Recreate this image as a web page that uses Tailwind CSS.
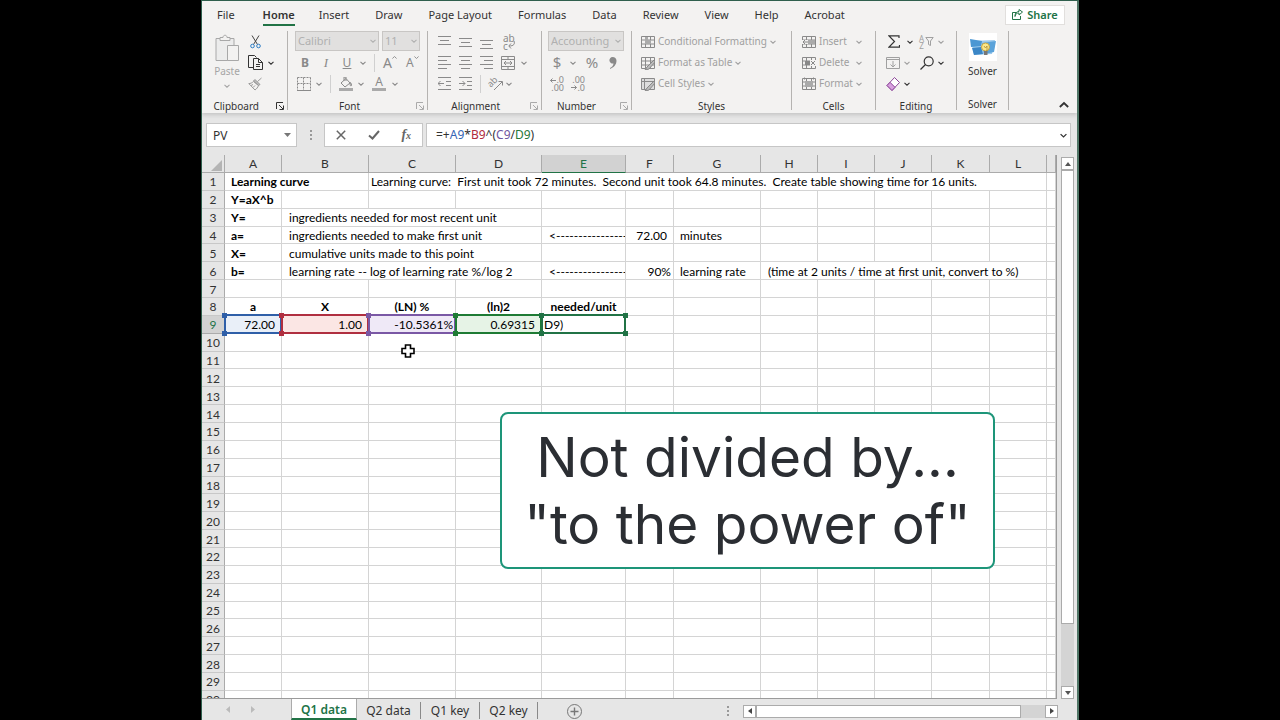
<!DOCTYPE html>
<html lang="en">
<head>
  <meta charset="UTF-8">
  <meta name="viewport" content="width=device-width, initial-scale=1.0" />
  <title>Learning curve - Excel</title>
  <script src="https://cdn.jsdelivr.net/npm/@tailwindcss/browser@4"></script>
</head>
<body class="bg-black px-[201px] font-['Noto_Sans',sans-serif] text-[10px] text-[#333]">

  <!-- shared icons -->
  <svg class="hidden">
    <symbol id="chev" viewBox="0 0 6 6"><path d="M.5 1.8 3 4.2 5.500 1.800" fill="none" stroke="currentColor" stroke-width="1.1"/></symbol>
    <symbol id="launch" viewBox="0 0 8 8"><path d="M.5 7V.5H7M3 3l4 4M7.500 3.500v4h-4" fill="none" stroke="currentColor"/></symbol>
    <symbol id="grid" viewBox="0 0 14 14"><path d="M.5 1.500h13v11H.5zM.5 5h13M.5 9h13M4.500 1.500v11M9.500 1.500v11" fill="none" stroke="currentColor"/></symbol>
  </svg>

  <main class="relative flex h-screen flex-col overflow-hidden border-t border-r-2 border-t-[#2f5f4d] border-r-[#4f7566] border-l border-l-[#2f5f4d] bg-[#e6e6e6]">

    <header class="bg-[#f3f2f1] shadow-[0_2px_4px_#c4c4c4]">
      <nav class="flex h-[29px] items-center gap-[28px] pr-[12px] pb-[2px] pl-[15px] text-[11px] leading-4">
        <a href="#">File</a>
        <a href="#" class="relative font-semibold after:absolute after:inset-x-0 after:-bottom-[3px] after:h-[2px] after:bg-[#217346]">Home</a>
        <a href="#" class="-ml-[4px]">Insert</a>
        <a href="#" class="-ml-[2px]">Draw</a>
        <a href="#" class="-ml-[2px]">Page Layout</a>
        <a href="#" class="-ml-[2px]">Formulas</a>
        <a href="#" class="-ml-[2px]">Data</a>
        <a href="#" class="-ml-[2px]">Review</a>
        <a href="#" class="-ml-[2px]">View</a>
        <a href="#" class="-ml-[2px]">Help</a>
        <a href="#" class="-ml-[2px]">Acrobat</a>
        <button class="ml-auto flex h-5 w-[60px] items-center justify-center gap-1 border border-[#e1dfdd] bg-white font-semibold text-[#217346]">
          <svg class="size-[11px]" viewBox="0 0 11 11" fill="none" stroke="currentColor"><path d="M4 3.500H.5v7h8V7M3 7.500c.3-2.500 1.800-3.500 4-3.500V6l3.500-3L7 .5v2C4.500 2.600 3 4 3 7.500z"/></svg>
          Share
        </button>
      </nav>

      <div class="flex h-[83px] pt-px pb-[3px]">
        <!-- Clipboard -->
        <section class="flex w-[85px] flex-col">
          <div class="flex h-[63px] pl-[10px] text-[#a5a5a5]">
            <button class="flex w-[30px] flex-col items-center">
              <svg class="mt-[3px] h-7 w-6 shrink-0" viewBox="0 0 24 28" fill="none" stroke="#a8a8a8"><path d="M1 4.500h18v22H1z" fill="#ececec"/><path d="M5 6.500V3.500h3c0-3 4-3 4 0h3v3z" fill="#f3f2f1"/><path d="M12.500 11.500h11v15h-11z" fill="#f3f2f1"/></svg>
              <span class="leading-[18px]">Paste</span>
              <svg class="mt-[3px] size-[6px]"><use href="#chev"/></svg>
            </button>
            <div class="ml-[5px] flex flex-col">
              <button aria-label="Cut" class="flex h-[21px] items-center pl-[3px]">
                <svg class="h-[14px] w-[11px]" viewBox="0 0 11 14" fill="none"><path d="M2 .5 7.500 9.500M9 .5 3.500 9.500" stroke="#444"/><circle cx="2.500" cy="11" r="1.800" stroke="#2b7cc4"/><circle cx="8.500" cy="11" r="1.800" stroke="#2b7cc4"/></svg>
              </button>
              <button aria-label="Copy" class="flex h-[21px] items-center gap-[5px] pl-[1px] text-[#333]">
                <svg class="h-[15px] w-[15px]" viewBox="0 0 15 15" fill="none" stroke="currentColor"><path d="M5 12.500H.5V.5h6l2 2"/><path d="M5.500 3.500h5l4 4v7h-9zM10.500 3.500v4h4M8 9.500h4M8 11.500h4"/></svg>
                <svg class="size-[6px]"><use href="#chev"/></svg>
              </button>
              <button aria-label="Format Painter" class="flex h-[21px] items-center pl-[1px]">
                <svg class="h-[14px] w-[15px]" viewBox="0 0 15 14" fill="none" stroke="#9a9a9a"><path d="m13.500 1-4 3.500M7 2.500l5 5-1.500 1-5-4.500z" fill="#bbb"/><path d="M5.500 4.500C4 6 2.500 6.500.8 6.600L7 13c1.500-1 2.800-2.600 3.500-4.500zM3 8.500l2-1M5 10.500l2-2"/></svg>
              </button>
            </div>
          </div>
          <div class="flex items-center justify-center pt-[6px] leading-3"><span class="ml-auto">Clipboard</span><button aria-label="Clipboard settings" class="mr-[3px] ml-[17px]"><svg class="size-2"><use href="#launch"/></svg></button></div>
        </section>

        <!-- Font -->
        <section class="flex w-[140px] flex-col border-l border-[#b5b3b1]">
          <div class="h-[63px] pl-[7px] text-[#8a8a8a]">
            <div class="flex h-[21px] gap-[3px] text-[11px] text-[#b0b0b0]">
              <div class="relative h-5 w-[84px]">
                <select aria-label="Font" class="h-5 w-full appearance-none border border-[#c8c6c4] bg-[#e1e0df] pl-[2px] leading-4"><option>Calibri</option></select>
                <svg class="pointer-events-none absolute top-[7px] right-[3px] size-[6px]"><use href="#chev"/></svg>
              </div>
              <div class="relative h-5 w-[38px]">
                <select aria-label="Font size" class="h-5 w-full appearance-none border border-[#c8c6c4] bg-[#e1e0df] pl-[2px] leading-4"><option>11</option></select>
                <svg class="pointer-events-none absolute top-[7px] right-[3px] size-[6px]"><use href="#chev"/></svg>
              </div>
            </div>
            <div class="flex h-[21px] items-center text-xs">
              <button class="w-[20px] font-bold">B</button>
              <button class="w-[22px] font-['Liberation_Serif',serif] text-[13px] italic">I</button>
              <button class="w-[20px] underline">U</button>
              <svg class="ml-[3px] size-[6px]"><use href="#chev"/></svg>
              <i class="mx-[8px] h-[18px] w-px bg-[#d0d0d0]"></i>
              <button class="flex w-[20px] items-start text-sm leading-4">A<svg class="size-[5px] rotate-180"><use href="#chev"/></svg></button>
              <button class="ml-[3px] flex items-start text-xs leading-4">A<svg class="size-[5px]"><use href="#chev"/></svg></button>
            </div>
            <div class="flex h-[21px] items-center">
              <button aria-label="Borders" class="ml-[2px]"><svg class="size-[14px]" viewBox="0 0 14 14" fill="none" stroke="currentColor"><path d="M.5.5h13M.5 6.500h13M.5.5v13M6.500.5v13M13.500.5v13" stroke-dasharray="2 1"/><path d="M0 13.500h14"/></svg></button>
              <svg class="ml-[5px] size-[6px]"><use href="#chev"/></svg>
              <i class="mx-[8px] h-[18px] w-px bg-[#d0d0d0]"></i>
              <button aria-label="Fill color"><svg class="h-[14px] w-[14px]" viewBox="0 0 14 14" fill="none" stroke="currentColor"><path d="m2 6 5-4.500L11 6 6 10zM5 4V0h2v4M11.500 5.500c1.500 2 1 3.500.5 3.500s-1.500-1-.5-3.500"/><path d="M0 12.500h14" stroke="#aaa" stroke-width="3"/></svg></button>
              <svg class="ml-[5px] size-[6px]"><use href="#chev"/></svg>
              <button class="ml-[8px] h-[15px] w-[14px] border-b-3 border-[#aaa] text-xs leading-[12px]">A</button>
              <svg class="ml-[6px] size-[6px]"><use href="#chev"/></svg>
            </div>
          </div>
          <div class="flex items-center pt-[6px] leading-3"><span class="ml-auto">Font</span><button aria-label="Font settings" class="mr-[3px] ml-[56px] text-[#aaa]"><svg class="size-2"><use href="#launch"/></svg></button></div>
        </section>

        <!-- Alignment -->
        <section class="flex w-[114px] flex-col border-l border-[#b5b3b1]">
          <div class="h-[63px] pl-[10px] text-[#8a8a8a]">
            <div class="flex h-[21px] items-center gap-[8px]">
              <button aria-label="Top Align"><svg class="size-[13px]" viewBox="0 0 13 13" stroke="currentColor"><path d="M0 1.500h13M2 5.500h9M0 9.500h13"/></svg></button>
              <button aria-label="Middle Align"><svg class="size-[13px]" viewBox="0 0 13 13" stroke="currentColor"><path d="M0 3.500h13M2 7.500h9M0 11.500h13"/></svg></button>
              <button aria-label="Bottom Align"><svg class="h-[15px] w-[13px]" viewBox="0 0 13 15" stroke="currentColor"><path d="M0 6.500h13M2 10.500h9M0 14.500h13"/></svg></button>
              <button aria-label="Wrap Text" class="relative h-[17px] w-[16px] pl-[2px] text-left text-[10px] leading-[8px]">ab<br>c<svg class="absolute right-[2px] bottom-px h-[8px] w-[7px]" viewBox="0 0 7 8" fill="none" stroke="currentColor"><path d="M6 0c1 3 0 5-5 5M3 2.500.8 5 3 7.500"/></svg></button>
            </div>
            <div class="flex h-[21px] items-center gap-[8px]">
              <button aria-label="Align Left"><svg class="size-[13px]" viewBox="0 0 13 13" stroke="currentColor"><path d="M0 .5h13M0 4.500h9M0 8.500h13M0 12.500h9"/></svg></button>
              <button aria-label="Center"><svg class="size-[13px]" viewBox="0 0 13 13" stroke="currentColor"><path d="M0 .5h13M2 4.500h9M0 8.500h13M2 12.500h9"/></svg></button>
              <button aria-label="Align Right"><svg class="size-[13px]" viewBox="0 0 13 13" stroke="currentColor"><path d="M0 .5h13M4 4.500h9M0 8.500h13M4 12.500h9"/></svg></button>
              <button aria-label="Merge" class="flex items-center gap-[6px]"><svg class="size-[14px]" viewBox="0 0 14 14" fill="none" stroke="currentColor"><path d="M.5.5h13v13H.5zM.5 3.500h13M.5 10.500h13M7 .5v3M7 10.500v3M3 7h8M5 5 3 7l2 2M9 5l2 2-2 2"/></svg><svg class="size-[6px]"><use href="#chev"/></svg></button>
            </div>
            <div class="flex h-[21px] items-center gap-[8px]">
              <button aria-label="Decrease Indent"><svg class="size-[13px]" viewBox="0 0 13 13" fill="none" stroke="currentColor"><path d="M0 .5h13M8 4.500h5M8 8.500h5M0 12.500h13M0 6.500h6M2.500 4 0 6.500 2.500 9"/></svg></button>
              <button aria-label="Increase Indent"><svg class="size-[13px]" viewBox="0 0 13 13" fill="none" stroke="currentColor"><path d="M0 .5h13M8 4.500h5M8 8.500h5M0 12.500h13M0 6.500h6M3.500 4 6 6.500 3.500 9"/></svg></button>
              <i class="h-[18px] w-px bg-[#d0d0d0]"></i>
              <button aria-label="Orientation" class="-ml-[2px] flex items-center gap-[3px]"><span class="relative h-[14px] w-[16px]"><span class="absolute top-0 left-0 -rotate-45 text-[9px] leading-[10px]">ab</span><svg class="absolute right-0 bottom-0 h-[12px] w-[12px]" viewBox="0 0 12 12" fill="none" stroke="currentColor"><path d="M3 11 11 3M7.500 2.500H11.500V6.500"/></svg></span><svg class="size-[6px]"><use href="#chev"/></svg></button>
            </div>
          </div>
          <div class="flex items-center pt-[6px] leading-3"><span class="ml-auto">Alignment</span><button aria-label="Alignment settings" class="mr-[3px] ml-[30px] text-[#aaa]"><svg class="size-2"><use href="#launch"/></svg></button></div>
        </section>

        <!-- Number -->
        <section class="flex w-[90px] flex-col border-l border-[#b5b3b1]">
          <div class="h-[63px] pl-[6px] text-[#8a8a8a]">
            <div class="relative h-[21px] w-[76px] text-[11px] text-[#b0b0b0]">
              <select aria-label="Number format" class="h-5 w-full appearance-none border border-[#c8c6c4] bg-[#e1e0df] pl-[2px] leading-4"><option>Accounting</option></select>
              <svg class="pointer-events-none absolute top-[7px] right-[3px] size-[6px]"><use href="#chev"/></svg>
            </div>
            <div class="flex h-[21px] items-center text-[15px]">
              <button class="w-[18px]">$</button>
              <svg class="ml-[4px] size-[6px]"><use href="#chev"/></svg>
              <button class="ml-[8px] w-[16px]">%</button>
              <button aria-label="Comma Style" class="ml-[9px]"><svg class="h-[12px] w-[8px]" viewBox="0 0 8 12" fill="currentColor"><path d="M3.500 0a3.300 3.300 0 1 0 1 6.500C4.300 8.500 3 10 1 11v1c4-1.500 6.500-4.500 6.500-8.200C7.500 1.500 5.800 0 3.500 0z"/></svg></button>
            </div>
            <div class="flex h-[21px] items-center gap-[7px] pl-[2px] text-[9px] leading-[8px]">
              <button class="relative w-[14px] pt-px text-right"><svg class="absolute top-[3px] left-0 h-[5px] w-[6px]" viewBox="0 0 6 5" fill="none" stroke="currentColor"><path d="M.5 2.500H6M2.500.5l-2 2 2 2"/></svg>.0<br>.00</button>
              <button class="relative w-[14px] pt-px text-right">.00<br>.0<svg class="absolute bottom-[2px] left-0 h-[5px] w-[6px]" viewBox="0 0 6 5" fill="none" stroke="currentColor"><path d="M0 2.500H5.500M3.500.5l2 2-2 2"/></svg></button>
            </div>
          </div>
          <div class="flex items-center pt-[6px] leading-3"><span class="ml-auto">Number</span><button aria-label="Number settings" class="mr-[3px] ml-6 text-[#aaa]"><svg class="size-2"><use href="#launch"/></svg></button></div>
        </section>

        <!-- Styles -->
        <section class="flex w-[160px] flex-col border-l border-[#b5b3b1]">
          <div class="h-[63px] pl-[9px] text-[#a0a0a0]">
            <button class="flex h-[21px] items-center gap-[3px]"><svg class="size-[14px] text-[#8a8a8a]" viewBox="0 0 14 14"><use href="#grid"/><path d="M4 2h3v3h3v4H4z" fill="#aaa"/></svg>Conditional Formatting<svg class="size-[6px]"><use href="#chev"/></svg></button>
            <button class="flex h-[21px] items-center gap-[3px]"><svg class="size-[14px] text-[#8a8a8a]" viewBox="0 0 14 14"><use href="#grid"/><path d="m13 4-7 7-2 3 4-1 6-7z" fill="#bbb" stroke="#888"/></svg>Format as Table<svg class="size-[6px]"><use href="#chev"/></svg></button>
            <button class="flex h-[21px] items-center gap-[3px]"><svg class="size-[14px] text-[#8a8a8a]" viewBox="0 0 14 14"><path d="M.5 1.500h13v11H.5zM.5 4.500h13M3.500 1.500v11" fill="#ddd" stroke="#8a8a8a"/><path d="m13 4-7 7-2 3 4-1 6-7z" fill="#bbb" stroke="#888"/></svg>Cell Styles<svg class="size-[6px]"><use href="#chev"/></svg></button>
          </div>
          <div class="pt-[6px] text-center leading-3">Styles</div>
        </section>

        <!-- Cells -->
        <section class="flex w-[84px] flex-col border-l border-[#b5b3b1]">
          <div class="h-[63px] pr-[13px] pl-[10px] text-[#a0a0a0]">
            <button class="flex h-[21px] w-full items-center gap-[3px]"><svg class="size-[14px] text-[#8a8a8a]" viewBox="0 0 14 14"><use href="#grid"/><path d="M0 5h6v4H0z" fill="#f3f2f1"/><path d="M6.500 7H1M3 5 1 7l2 2" fill="none" stroke="#888"/><path d="M6 5h7v4H6z" fill="#aaa"/></svg>Insert<svg class="ml-auto size-[6px]"><use href="#chev"/></svg></button>
            <button class="flex h-[21px] w-full items-center gap-[3px]"><svg class="size-[14px] text-[#8a8a8a]" viewBox="0 0 14 14"><use href="#grid"/><path d="M8 4h6v6H8z" fill="#f3f2f1"/><path d="m9 5 4 4M13 5 9 9" stroke="#888"/><path d="M3 5h5v4H3z" fill="#888"/></svg>Delete<svg class="ml-auto size-[6px]"><use href="#chev"/></svg></button>
            <button class="flex h-[21px] w-full items-center gap-[3px]"><svg class="size-[14px] text-[#8a8a8a]" viewBox="0 0 14 14"><use href="#grid"/><path d="M3 4h8v6H3z" fill="#aaa"/><path d="M2.500.5v2M11.500.5v2M2.500 1.500h9" stroke="#888"/></svg>Format<svg class="ml-auto size-[6px]"><use href="#chev"/></svg></button>
          </div>
          <div class="pt-[6px] text-center leading-3">Cells</div>
        </section>

        <!-- Editing -->
        <section class="flex w-[81px] flex-col border-l border-[#b5b3b1]">
          <div class="h-[63px] pl-[10px] text-[#333]">
            <div class="flex h-[21px] items-center">
              <button aria-label="AutoSum" class="flex w-[25px] items-center gap-[7px] pl-[2px]"><svg class="h-[13px] w-[12px] shrink-0" viewBox="0 0 12 13" fill="none" stroke="currentColor" stroke-width="1.200"><path d="M11 3V.8H1l5.500 5.700L1 12.200h10.500V10"/></svg><svg class="size-[6px] shrink-0"><use href="#chev"/></svg></button>
              <button aria-label="Sort and Filter" class="ml-[8px] flex items-center gap-[4px] text-[#a0a0a0]"><span class="text-[8px] leading-[7px]">A<br>Z</span><svg class="-ml-[3px] h-[9px] w-[9px]" viewBox="0 0 9 9" fill="none" stroke="currentColor"><path d="M.8.5h7.400L5.500 4v4.500L3.500 7.500V4z"/></svg><svg class="size-[6px]"><use href="#chev"/></svg></button>
            </div>
            <div class="flex h-[21px] items-center">
              <button aria-label="Fill" class="flex w-[25px] items-center gap-[4px] text-[#a0a0a0]"><svg class="h-[12px] w-[14px] shrink-0" viewBox="0 0 14 12" fill="none" stroke="currentColor"><path d="M.5.5h13v11H.5zM.5 2.500h13M7 4v6M4.500 7.500 7 10l2.500-2.500"/></svg><svg class="size-[6px] shrink-0"><use href="#chev"/></svg></button>
              <button aria-label="Find and Select" class="ml-[9px] flex items-center gap-[4px]"><svg class="size-[14px]" viewBox="0 0 14 14" fill="none" stroke="currentColor" stroke-width="1.200"><circle cx="8.700" cy="5.300" r="4.500"/><path d="M5.500 8.500.5 13.500"/></svg><svg class="size-[6px]"><use href="#chev"/></svg></button>
            </div>
            <button aria-label="Clear" class="flex h-[21px] items-center gap-[4px]"><svg class="size-[14px]" viewBox="0 0 14 14" fill="#fff" stroke="#8c4799"><path d="m1 8.500 7.500-8 5 5-7.500 8z"/><path d="m1 8.500 3-3.200 5 5L6 13.500z" fill="#d8a0df"/></svg><svg class="size-[6px]"><use href="#chev"/></svg></button>
          </div>
          <div class="pt-[6px] text-center leading-3">Editing</div>
        </section>

        <!-- Solver -->
        <section class="flex w-[53px] flex-col border-x border-[#b5b3b1]">
          <button class="flex h-[63px] flex-col items-center pt-[2px]">
            <svg class="size-7 shrink-0" viewBox="0 0 28 28"><path d="M0 0h28v28H0z" fill="#fff"/><path d="m2 8 24-1-3 14-18 1z" fill="#9cc9ec"/><path d="m1 6 12 2-1 5-10 1z" fill="#4b97d3"/><path d="m13 10 14-2-2 11-10 2z" fill="#5ba3da"/><path d="m3 15 9-1 2 7-9 1z" fill="#3b86c6"/><circle cx="16.500" cy="14" r="4" fill="#fbe88a" stroke="#c9a640"/><path d="M15 18h3.500v4H15z" fill="#777"/><path d="m15 13 1.500 2 1.500-2v5" fill="none" stroke="#a5812c" stroke-width=".7"/></svg>
            <span class="leading-[20px]">Solver</span>
          </button>
          <div class="pt-[6px] text-center leading-3">Solver</div>
        </section>
        <button aria-label="Collapse the Ribbon" class="mr-2 ml-auto self-end"><svg class="size-[10px] rotate-180"><use href="#chev"/></svg></button>
      </div>
    </header>

    <!-- formula bar -->
    <div class="mt-[10px] flex h-6 shrink-0 pr-[6px] pl-[4px] text-xs leading-4">
      <div class="relative w-[91px] border border-[#c6c6c6] bg-white">
        <input aria-label="Name Box" value="PV" class="h-full w-full pl-[6px] outline-none">
        <svg class="absolute top-[9px] right-[5px] h-1 w-[7px]" viewBox="0 0 7 4"><path d="M0 0h7L3.500 4z" fill="#777"/></svg>
      </div>
      <div class="flex w-[27px] items-center justify-center"><svg class="h-[11px] w-[2px]" viewBox="0 0 2 11" fill="#999"><path d="M0 0h2v2H0zM0 4h2v2H0zM0 8h2v2H0z"/></svg></div>
      <div class="flex w-[99px] items-center justify-around border border-[#c6c6c6] bg-white text-[#666]">
        <button aria-label="Cancel"><svg class="size-[10px]" viewBox="0 0 10 10" fill="none" stroke="currentColor" stroke-width="1.500"><path d="m.8.8 8.400 8.400M9.200.8.8 9.200"/></svg></button>
        <button aria-label="Enter"><svg class="h-[10px] w-[12px]" viewBox="0 0 12 10" fill="none" stroke="currentColor" stroke-width="2"><path d="m1 5.500 3.500 3L11 1"/></svg></button>
        <button aria-label="Insert Function" class="font-['Liberation_Serif',serif] text-sm font-bold italic">f<span class="text-[10px]">x</span></button>
      </div>
      <div class="ml-[3px] flex flex-1 items-center border border-[#c6c6c6] bg-white pr-[3px] pl-[9px]">
        <div role="textbox" aria-label="Formula Bar" contenteditable="true" class="flex-1 outline-none">=+<span class="text-[#3565b5]">A9</span>*<span class="text-[#b02a3c]">B9</span>^(<span class="text-[#6f559f]">C9</span>/<span class="text-[#27793a]">D9</span>)</div>
        <svg class="size-[7px]"><use href="#chev"/></svg>
      </div>
    </div>

    <!-- worksheet -->
    <div class="mt-2 flex min-h-0 flex-1">
      <div class="flex-1 overflow-hidden border-r border-b border-[#9b9b9b]">
        <table class="h-[554px] w-full table-fixed border-separate border-spacing-0 font-['Lato',sans-serif] text-xs leading-[14px] text-black">
          <colgroup>
            <col class="w-[23px]"><col class="w-[57px]"><col class="w-[87px]"><col class="w-[87px]"><col class="w-[86px]"><col class="w-[84px]"><col class="w-[48px]"><col class="w-[87px]"><col class="w-[57px]"><col class="w-[57px]"><col class="w-[57px]"><col class="w-[58px]"><col class="w-[57px]"><col>
          </colgroup>
          <thead><tr id="letters" class="h-[18px]"></tr></thead>
          <tbody id="rows"></tbody>
        </table>
      </div>
      <div class="flex w-[20px] flex-col pt-[2px] pr-[3px] pl-[4px]">
        <button aria-label="Scroll up" class="flex h-[13px] items-center justify-center border border-[#ababab] bg-white"><svg class="h-[4px] w-[6px]" viewBox="0 0 6 4"><path d="M0 4h6L3 0z" fill="#555"/></svg></button>
        <div class="flex-1 bg-[#d4d4d4]"><div class="h-[88%] border border-[#ababab] bg-white"></div></div>
        <button aria-label="Scroll down" class="flex h-[13px] items-center justify-center border border-[#ababab] bg-white"><svg class="h-[4px] w-[6px]" viewBox="0 0 6 4"><path d="M0 0h6L3 4z" fill="#555"/></svg></button>
      </div>
    </div>

    <!-- sheet tabs -->
    <footer class="flex h-[21px] shrink-0 text-xs leading-4">
      <div class="flex w-[89px] items-center gap-[21px] pl-[24px]">
        <svg class="h-[7px] w-[4px]" viewBox="0 0 4 7"><path d="M4 0v7L0 3.500z" fill="#bbb"/></svg>
        <svg class="h-[7px] w-[4px]" viewBox="0 0 4 7"><path d="M0 0v7l4-3.500z" fill="#bbb"/></svg>
      </div>
      <button class="w-[66px] border-x border-b-2 border-x-[#ababab] border-b-[#217346] bg-white pt-[2px] font-semibold text-[#217346]">Q1 data</button>
      <button class="mt-[3px] mb-px w-[64px] border-r border-[#8a8a8a]">Q2 data</button>
      <button class="mt-[3px] mb-px w-[59px] border-r border-[#8a8a8a]">Q1 key</button>
      <button class="mt-[3px] mb-px w-[58px] border-r border-[#8a8a8a]">Q2 key</button>
      <button aria-label="New sheet" class="ml-[29px] pt-[3px]"><svg class="size-[15px]" viewBox="0 0 15 15" fill="none" stroke="#777"><circle cx="7.500" cy="7.500" r="7"/><path d="M7.500 3.500v8M3.500 7.500h8" stroke-width="1.400"/></svg></button>
      <div class="ml-auto flex items-center pt-[3px] pr-[19px]">
        <svg class="mr-[14px] h-[10px] w-[2px]" viewBox="0 0 2 10" fill="#999"><path d="M0 0h2v2H0zM0 4h2v2H0zM0 8h2v2H0z"/></svg>
        <button aria-label="Scroll left" class="flex h-[13px] w-[13px] items-center justify-center border border-[#ababab] bg-white"><svg class="h-[6px] w-[4px]" viewBox="0 0 4 6"><path d="M4 0v6L0 3z" fill="#444"/></svg></button>
        <div class="h-[13px] w-[289px] bg-[#d4d4d4]"><div class="h-full w-[265px] border border-[#ababab] bg-white"></div></div>
        <button aria-label="Scroll right" class="flex h-[13px] w-[13px] items-center justify-center border border-[#ababab] bg-white"><svg class="h-[6px] w-[4px]" viewBox="0 0 4 6"><path d="M0 0v6l4-3z" fill="#444"/></svg></button>
      </div>
    </footer>

    <!-- mouse pointer -->
    <svg class="absolute top-[343px] left-[199px] size-[14px]" viewBox="0 0 14 14"><path d="M4.500 1h5v3.500H13v5H9.500V13h-5V9.500H1v-5h3.500z" fill="#fff" stroke="#000" stroke-width="1.600"/></svg>

    <!-- caption over the sheet -->
    <div class="absolute top-[411px] left-[298px] flex h-[157px] w-[495px] flex-col items-center justify-center rounded-lg border-2 border-[#1d9579] bg-white font-['Inter',sans-serif] text-[55px] leading-[67px] whitespace-nowrap text-[#2b2e33]">
      <span>Not divided by...</span>
      <span>"to the power of"</span>
    </div>
  </main>

  <script>
    const letters = ['A', 'B', 'C', 'D', 'E', 'F', 'G', 'H', 'I', 'J', 'K', 'L', ''];

    // [column, text, classes, colspan]
    const cells = {
      1: [[0, 'Learning curve', 'pl-[6px] font-bold', 2], [2, 'Learning curve:  First unit took 72 minutes.  Second unit took 64.8 minutes.  Create table showing time for 16 units.', 'pl-[2px]', 10]],
      2: [[0, 'Y=aX^b', 'pl-[6px] font-bold']],
      3: [[0, 'Y=', 'pl-[6px] font-bold'], [1, 'ingredients needed for most recent unit', 'pl-[7px]', 3]],
      4: [[0, 'a=', 'pl-[6px] font-bold'], [1, 'ingredients needed to make first unit', 'pl-[7px]', 3], [4, '<----------------', 'pl-[7px]'], [5, '72.00', 'pr-[6px] text-right'], [6, 'minutes', 'pl-[6px]']],
      5: [[0, 'X=', 'pl-[6px] font-bold'], [1, 'cumulative units made to this point', 'pl-[7px]', 3]],
      6: [[0, 'b=', 'pl-[6px] font-bold'], [1, 'learning rate -- log of learning rate %/log 2', 'pl-[7px]', 3], [4, '<----------------', 'pl-[7px]'], [5, '90%', 'pr-[2px] text-right'], [6, 'learning rate', 'pl-[6px]'], [7, '(time at 2 units / time at first unit, convert to %)', 'pl-[7px]', 5]],
      8: [[0, 'a', 'text-center font-bold'], [1, 'X', 'text-center font-bold'], [2, '(LN) %', 'text-center font-bold'], [3, '(ln)2', 'text-center font-bold'], [4, 'needed/unit', 'text-center font-bold']],
      9: [[0, '72.00', 'pr-[6px] text-right bg-[#e9eff8]'], [1, '1.00', 'pr-[6px] text-right bg-[#fbe6e4]'], [2, '-10.5361%', 'pr-[2px] text-right bg-[#efe9f7]'], [3, '0.69315', 'pr-[6px] text-right bg-[#e6f3e6]'], [4, 'D9)', 'pl-[2px]']]
    };

    const outlines = ['border-[#2f5fa8]', 'border-[#b02f40]', 'border-[#7a58a5]', 'border-[#1e7b34]', 'border-[#217346]'];
    const handles = ['bg-[#2f5fa8]', 'bg-[#b02f40]', 'bg-[#7a58a5]', 'bg-[#1e7b34]', 'bg-[#217346]'];
    const corners = ['-top-[3px] -left-[3px]', '-top-[3px] -right-[3px]', '-bottom-[3px] -left-[3px]', '-bottom-[3px] -right-[3px]'];

    function outline(i) {
      return `<i class="absolute -top-[2px] -right-px -bottom-px -left-px border-2 ${outlines[i]}"></i>`
        + corners.map(p => `<i class="absolute z-10 size-[5px] ${p} ${handles[i]}"></i>`).join('');
    }

    document.getElementById('letters').innerHTML =
      '<th class="border-r border-b border-[#ababab]"><svg class="mt-[3px] ml-[9px] size-[11px]" viewBox="0 0 11 11"><path d="M11 0v11H0z" fill="#b4b4b4"/></svg></th>'
      + letters.map(l => `<th scope="col" class="border-r border-b font-normal text-[#333] ${l === 'E' ? 'border-r-[#ababab] border-b-[#217346] bg-[#d2d2d2] text-[#217346]!' : 'border-[#ababab]'}">${l}</th>`).join('');

    let html = '';
    for (let r = 1; r <= 30; r++) {
      html += `<tr><th scope="row" class="border-r border-b p-0 pt-[2px] font-normal ${r === 9 ? 'border-r-[#217346] border-b-[#ababab] bg-[#d2d2d2] text-[#217346]' : 'border-r-[#ababab] border-b-[#c8c8c8] text-[#333]'}">${r}</th>`;
      for (let c = 0; c < 13;) {
        const cell = (cells[r] || []).find(x => x[0] === c) || [c, '', ''];
        const span = cell[3] || 1;
        const text = cell[1].replace('<', '&lt;');
        const marked = r === 9 && c < 5;
        html += `<td colspan="${span}" class="relative border-r border-b border-[#d4d4d4] p-0 pt-[2px] whitespace-pre ${marked ? '' : 'overflow-hidden'} ${cell[2]} ${cell[2].includes('bg-') ? '' : 'bg-white'}">${text}${marked ? outline(c) : ''}</td>`;
        c += span;
      }
      html += '</tr>';
    }
    document.getElementById('rows').innerHTML = html;
  </script>
</body>
</html>
